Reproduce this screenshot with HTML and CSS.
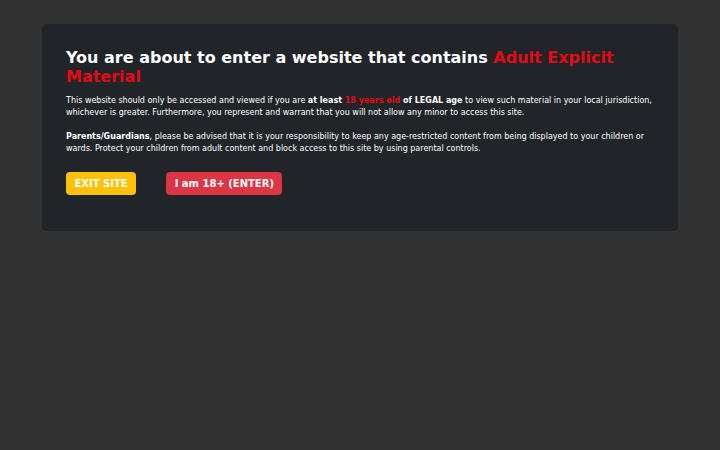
FILE: index.html
```html
<!DOCTYPE html>
<html lang="en">
<head>
    <meta charset="UTF-8">
    <meta name="viewport" content="width=device-width, initial-scale=1.0">
    <title>Age Verification</title>
    <link rel="stylesheet" href="styles.css">
</head>
<body>
    <div class="age-gate">
        <h1>You are about to enter a website that contains <span class="red">Adult Explicit Material</span></h1>
        <p>This website should only be accessed and viewed if you are <b>at least <span class="red">18 years old</span> of LEGAL age</b> to view such material in your local jurisdiction, whichever is greater. Furthermore, you represent and warrant that you will not allow any minor to access this site.</p>
        <p><b>Parents/Guardians</b>, please be advised that it is your responsibility to keep any age-restricted content from being displayed to your children or wards. Protect your children from adult content and block access to this site by using parental controls.</p>
        <div class="actions">
            <button class="btn btn-exit">EXIT SITE</button>
            <button class="btn btn-enter">I am 18+ (ENTER)</button>
        </div>
    </div>
</body>
</html>
```

FILE: styles.css
```css
body {
    font-family: "DejaVu Sans", sans-serif;
    background-color: #313131;
    margin: 0;
    padding: 24px 42px;
    color: #fff;
}
.age-gate {
    background-color: #212529;
    border-radius: 4px;
    padding: 24px 24px 36px;
}
h1 {
    font-size: 16px;
    line-height: 19px;
    margin: 0 0 9px;
}
.red {
    color: #e50914;
}
p {
    font-size: 8px;
    line-height: 12px;
    margin: 0 0 12px;
}
.actions {
    display: flex;
    gap: 30px;
    margin-top: 17px;
}
.btn {
    font-family: "DejaVu Sans", sans-serif;
    font-size: 10px;
    font-weight: bold;
    color: #fff;
    border: none;
    border-radius: 4px;
    padding: 0 8.5px;
    height: 23px;
}
.btn-exit {
    background-color: #ffc107;
}
.btn-enter {
    background-color: #dc3545;
}
```
